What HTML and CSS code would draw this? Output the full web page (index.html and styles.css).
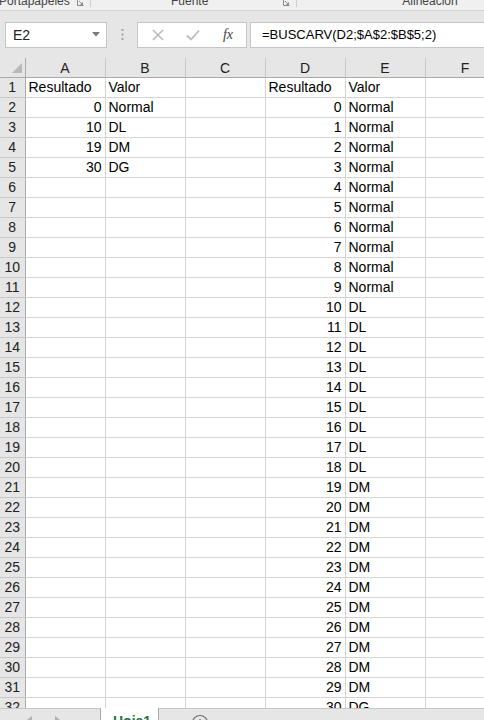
FILE: index.html
```html
<!DOCTYPE html>
<html lang="es">
<head>
    <meta charset="UTF-8">
    <meta name="viewport" content="width=device-width, initial-scale=1.0">
    <title>Libro1 - Excel</title>
    <link rel="stylesheet" href="styles.css">
</head>
<body>
    <div class="ribbon">
        <div class="group group-clip">
            <span class="group-label">Portapapeles</span>
            <svg class="launcher" width="7" height="7" viewBox="0 0 7 7"><path d="M0.5 0.5V6.5H6.5" fill="none" stroke="#8a8a8a"/><path d="M2 2L5.5 5.5M3.5 5.5H5.5V3.5" fill="none" stroke="#8a8a8a"/></svg>
        </div>
        <div class="group group-font">
            <span class="group-label">Fuente</span>
            <svg class="launcher" width="7" height="7" viewBox="0 0 7 7"><path d="M0.5 0.5V6.5H6.5" fill="none" stroke="#8a8a8a"/><path d="M2 2L5.5 5.5M3.5 5.5H5.5V3.5" fill="none" stroke="#8a8a8a"/></svg>
        </div>
        <div class="group group-align">
            <span class="group-label">Alineación</span>
        </div>
    </div>

    <div class="formula-bar">
        <div class="name-box">
            <span>E2</span>
            <svg width="8" height="5" viewBox="0 0 8 5"><path d="M0 0H8L4 4.5Z" fill="#7a7a7a"/></svg>
        </div>
        <svg class="grip" width="3" height="11" viewBox="0 0 3 11"><rect x="0.5" y="0" width="2" height="2" fill="#a6a6a6"/><rect x="0.5" y="4.5" width="2" height="2" fill="#a6a6a6"/><rect x="0.5" y="9" width="2" height="2" fill="#a6a6a6"/></svg>
        <div class="fx-box">
            <svg width="12" height="12" viewBox="0 0 12 12"><path d="M1 1L11 11M11 1L1 11" stroke="#bcbcbc" stroke-width="1.6"/></svg>
            <svg width="14" height="12" viewBox="0 0 14 12"><path d="M1 6.5L5 10.5L13 1.5" fill="none" stroke="#bcbcbc" stroke-width="1.8"/></svg>
            <span class="fx">fx</span>
        </div>
        <div class="formula-input">=BUSCARV(D2;$A$2:$B$5;2)</div>
    </div>

    <div class="sheet">
        <table class="grid">
            <colgroup>
                <col class="col-rh">
                <col class="col-cell"><col class="col-cell"><col class="col-cell">
                <col class="col-cell"><col class="col-cell"><col class="col-cell">
            </colgroup>
            <thead>
                <tr>
                    <th class="corner"><svg width="25" height="19" viewBox="0 0 25 19"><path d="M12 15H22V5Z" fill="#b8b8b8"/></svg></th>
                    <th>A</th><th>B</th><th>C</th><th>D</th><th>E</th><th>F</th>
                </tr>
            </thead>
            <tbody id="rows"></tbody>
        </table>
    </div>

    <div class="tabs">
        <div class="tab-nav">
            <svg width="6" height="8" viewBox="0 0 6 8"><path d="M5 0V8L0 4Z" fill="#b0b0b0"/></svg>
            <svg width="6" height="8" viewBox="0 0 6 8"><path d="M1 0V8L6 4Z" fill="#b0b0b0"/></svg>
        </div>
        <div class="tab active">Hoja1</div>
        <div class="tab-add">
            <svg width="18" height="18" viewBox="0 0 18 18"><circle cx="9" cy="9" r="7.5" fill="none" stroke="#6f6f6f" stroke-width="1.2"/><path d="M9 5V13M5 9H13" stroke="#6f6f6f" stroke-width="1.2"/></svg>
        </div>
        <div class="tab-rest"></div>
    </div>

    <script>
        // tabla de referencia (A:B) y resultados de BUSCARV (D:E)
        const lookup = [[0, 'Normal'], [10, 'DL'], [19, 'DM'], [30, 'DG']];
        const tbody = document.getElementById('rows');

        function valueFor(n) {
            let result = '';
            lookup.forEach(([limit, label]) => {
                if (n >= limit) result = label;
            });
            return result;
        }

        function cell(text, cls) {
            const td = document.createElement('td');
            if (cls) td.className = cls;
            td.textContent = text;
            return td;
        }

        for (let r = 1; r <= 32; r++) {
            const tr = document.createElement('tr');
            tr.appendChild(cell(r, 'rh'));
            if (r === 1) {
                tr.appendChild(cell('Resultado'));
                tr.appendChild(cell('Valor'));
                tr.appendChild(cell(''));
                tr.appendChild(cell('Resultado'));
                tr.appendChild(cell('Valor'));
            } else {
                const ref = lookup[r - 2];
                tr.appendChild(cell(ref ? ref[0] : '', 'num'));
                tr.appendChild(cell(ref ? ref[1] : ''));
                tr.appendChild(cell(''));
                tr.appendChild(cell(r - 2, 'num'));
                tr.appendChild(cell(valueFor(r - 2)));
            }
            tr.appendChild(cell(''));
            tbody.appendChild(tr);
        }
    </script>
</body>
</html>
```

FILE: styles.css
```css
body {
    margin: 0;
    width: 484px;
    height: 720px;
    overflow: hidden;
    display: flex;
    flex-direction: column;
    background-color: #e6e6e6;
    font-family: 'Liberation Sans', Arial, sans-serif;
    color: #000000;
}
.ribbon {
    height: 10px;
    flex: none;
    display: flex;
    overflow: hidden;
    border-bottom: 1px solid #d4d4d4;
    background-color: #f0f0f0;
}
.group {
    display: flex;
    align-items: flex-start;
    flex: none;
    border-right: 1px solid #cfcfcf;
    height: 7px;
}
.group-label {
    font-size: 12px;
    line-height: 14px;
    margin-top: -6px;
    color: #444444;
    white-space: nowrap;
}
.launcher {
    margin-left: auto;
    margin-right: 6px;
    margin-top: -1px;
}
.group-clip {
    width: 91px;
    margin-left: -1px;
}
.group-font {
    width: 205px;
    justify-content: center;
}
.group-font .group-label {
    margin-left: 80px;
}
.group-align {
    width: 266px;
    justify-content: center;
    border-right: none;
}
.formula-bar {
    height: 47px;
    flex: none;
    display: flex;
    align-items: center;
    padding-left: 5px;
}
.name-box {
    background-color: #ffffff;
    border: 1px solid #c6c6c6;
    display: flex;
    align-items: center;
    justify-content: space-between;
    padding: 0 6px 0 7px;
    box-sizing: border-box;
    width: 102px;
    height: 26px;
    font-size: 14px;
    color: #222222;
}
.grip {
    margin-left: 14px;
}
.fx-box {
    margin-left: 13px;
    width: 110px;
    height: 26px;
    box-sizing: border-box;
    background-color: #ffffff;
    border: 1px solid #c6c6c6;
    display: flex;
    align-items: center;
    justify-content: space-between;
    padding: 0 13px 0 14px;
}
.fx {
    font-family: 'Liberation Serif', 'Times New Roman', serif;
    font-style: italic;
    font-size: 14px;
    color: #3c3c3c;
}
.formula-input {
    margin-left: 3px;
    flex: 1;
    height: 26px;
    box-sizing: border-box;
    background-color: #ffffff;
    border: 1px solid #c6c6c6;
    border-right: none;
    font-size: 13px;
    line-height: 24px;
    padding-left: 11px;
    white-space: nowrap;
}
.sheet {
    flex: 1;
    overflow: hidden;
    background-color: #ffffff;
}
.grid {
    border-collapse: collapse;
    table-layout: fixed;
    width: 505px;
}
.col-rh {
    width: 25px;
}
.col-cell {
    width: 80px;
}
.grid th {
    height: 19px;
    padding: 0;
    font-weight: normal;
    font-size: 14px;
    color: #222222;
    background-color: #e6e6e6;
    border-right: 1px solid #c8c8c8;
    border-bottom: 1px solid #ababab;
}
.grid th.corner {
    border-right: 1px solid #ababab;
    line-height: 0;
}
.grid td {
    height: 19px;
    padding: 0 3px;
    font-size: 14px;
    line-height: 19px;
    white-space: nowrap;
    overflow: hidden;
    border-right: 1px solid #d4d4d4;
    border-bottom: 1px solid #d4d4d4;
}
.grid td.rh {
    padding: 0;
    text-align: center;
    color: #222222;
    background-color: #e6e6e6;
    border-right: 1px solid #ababab;
    border-bottom: 1px solid #c8c8c8;
}
.grid td.num {
    text-align: right;
}
.tabs {
    height: 12px;
    flex: none;
    display: flex;
    overflow: hidden;
}
.tab-nav {
    width: 100px;
    border-top: 1px solid #c6c6c6;
    display: flex;
    align-items: flex-end;
    gap: 21px;
    padding-left: 27px;
    box-sizing: border-box;
}
.tab-nav svg {
    margin-bottom: -4px;
}
.tab {
    width: 59px;
    box-sizing: border-box;
    border-left: 1px solid #a8a8a8;
    border-right: 1px solid #a8a8a8;
    background-color: #ffffff;
    padding: 5px 0 0 12px;
    font-size: 14px;
    font-weight: bold;
    color: #217346;
    line-height: 16px;
}
.tab-add {
    width: 80px;
    border-top: 1px solid #c6c6c6;
    box-sizing: border-box;
    padding: 5px 0 0 32px;
}
.tab-rest {
    flex: 1;
    border-top: 1px solid #c6c6c6;
}
```
